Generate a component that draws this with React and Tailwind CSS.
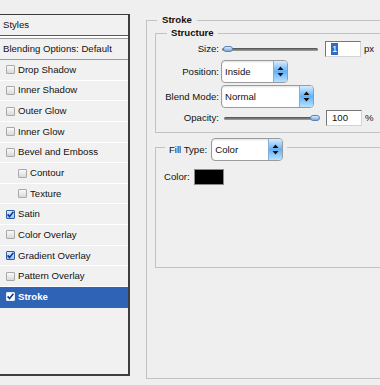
import React from "react";

const rows = [
  { label: "Drop Shadow" },
  { label: "Inner Shadow" },
  { label: "Outer Glow" },
  { label: "Inner Glow" },
  { label: "Bevel and Emboss" },
  { label: "Contour", indent: true },
  { label: "Texture", indent: true },
  { label: "Satin", checked: true },
  { label: "Color Overlay" },
  { label: "Gradient Overlay", checked: true },
  { label: "Pattern Overlay" },
  { label: "Stroke", checked: true, selected: true },
];

const Box = ({ checked, selected }) => (
  <span
    className={`w-[9px] h-[9px] shrink-0 rounded-[1px] border flex items-center justify-center ${
      checked
        ? selected
          ? "border-[#dfe9f7] bg-white"
          : "border-[#2d5ea8] bg-linear-to-b from-[#e4efff] to-[#9cc0ec]"
        : "border-[#a9a9a9] bg-linear-to-b from-[#fafafa] to-[#d9d9d9]"
    }`}
  >
    {checked && (
      <svg width="7" height="7" viewBox="0 0 7 7">
        <path d="M0.6 3.4 L2.6 5.6 L6.4 0.8" stroke="#17398a" strokeWidth="1.6" fill="none" />
      </svg>
    )}
  </span>
);

const Select = ({ value, className }) => (
  <div className={`${className} h-[23px] flex rounded-[4px] border border-[#9b9b9b] bg-white overflow-hidden shadow-[inset_0_1px_2px_rgba(0,0,0,0.12)]`}>
    <span className="flex-1 flex items-center pl-[3px]">{value}</span>
    <span className="w-[14px] flex items-center justify-center border-l border-[#86aedb] bg-linear-to-b from-[#d6ecff] via-[#62b2f6] to-[#b6e2ff]">
      <svg width="7" height="11" viewBox="0 0 7 11">
        <path d="M3.5 0.5 L6.5 4 L0.5 4 Z M0.5 7 L6.5 7 L3.5 10.5 Z" fill="#111" />
      </svg>
    </span>
  </div>
);

const Slider = ({ at, className }) => (
  <div className={`relative ${className} h-[10px]`}>
    <div className="absolute left-0 right-0 top-[4px] h-[3px] rounded-full bg-linear-to-b from-[#4d4d4d] to-[#a6a6a6]" />
    <div
      className={`absolute top-[2px] w-[10px] h-[6px] rounded-full border border-[#5b85b8] bg-linear-to-b from-[#dcecfc] to-[#7aa9de] ${
        at === "end" ? "right-[-2px]" : "left-[1px]"
      }`}
    />
  </div>
);

const Field = ({ children }) => (
  <div className="w-[36px] h-[16px] flex items-center pl-[5px] bg-white border border-[#777] border-r-[#d4d4d4] border-b-[#d4d4d4]">
    {children}
  </div>
);

export default function App() {
  return (
    <div className="w-[380px] h-[385px] overflow-hidden flex bg-[#efefef] text-[9.6px] leading-[12px] text-[#111] font-['Liberation_Sans',Arial,sans-serif]">
      {/* styles list */}
      <div className="mt-[14px] w-[130px] h-[362px] shrink-0 flex flex-col bg-[#f1f1f1] border-t border-r-2 border-b-2 border-[#3d3d3d]">
        <div className="h-[21px] flex items-center pl-[3px] border-b border-[#5a5a5a]">Styles</div>
        <div className="h-[2px] bg-white" />
        <div className="h-[22px] flex items-center pl-[3px] border-t border-[#5a5a5a] border-b border-[#9a9a9a]">
          Blending Options: Default
        </div>
        {rows.map((r) => (
          <div
            key={r.label}
            className={`h-[20.65px] flex items-center gap-[3px] border-b ${r.indent ? "pl-[18px]" : "pl-[6px]"} ${
              r.selected ? "bg-[#2f63b5] border-[#2f63b5] text-white font-bold" : "border-white"
            }`}
          >
            <Box checked={r.checked} selected={r.selected} />
            <span>{r.label}</span>
          </div>
        ))}
      </div>

      {/* stroke panel */}
      <fieldset className="ml-[16px] mt-[14px] w-[234px] h-[365px] shrink-0 border-l border-t border-b border-r-0 border-[#c2c2c2]">
        <legend className="ml-[10px] px-[5px] font-bold leading-[12px]">Stroke</legend>

        <fieldset className="ml-[8px] mt-[1px] pb-[6px] border-l border-t border-b border-r-0 border-[#c2c2c2]">
          <legend className="ml-[11px] px-[4px] font-bold leading-[12px]">Structure</legend>

          <div className="mt-[1px] h-[17px] flex items-center">
            <span className="w-[63px] text-right">Size:</span>
            <Slider className="ml-[3px] w-[96px]" />
            <div className="ml-[7px]">
              <Field>
                <span className="bg-[#316ac5] text-white px-[1px]">1</span>
              </Field>
            </div>
            <span className="ml-[3px]">px</span>
          </div>

          <div className="mt-[3px] h-[23px] flex items-center">
            <span className="w-[63px] text-right">Position:</span>
            <Select value="Inside" className="ml-[2px] w-[67px]" />
          </div>

          <div className="mt-[2px] h-[23px] flex items-center">
            <span className="w-[63px] text-right">Blend Mode:</span>
            <Select value="Normal" className="ml-[2px] w-[93px]" />
          </div>

          <div className="mt-[2px] h-[16px] flex items-center">
            <span className="w-[63px] text-right">Opacity:</span>
            <Slider at="end" className="ml-[5px] w-[94px]" />
            <div className="ml-[8px]">
              <Field>100</Field>
            </div>
            <span className="ml-[3px]">%</span>
          </div>
        </fieldset>

        <fieldset className="ml-[8px] mt-[1px] h-[134px] border-l border-t border-b border-r-0 border-[#c2c2c2]">
          <legend className="ml-[9px] px-[4px] pt-[4px]">
            <div className="flex items-center">
              <span>Fill Type:</span>
              <Select value="Color" className="ml-[4px] w-[72px]" />
            </div>
          </legend>

          <div className="mt-[8px] pl-[8px] flex items-center">
            <span>Color:</span>
            <span className="ml-[4px] w-[30px] h-[16px] bg-black border border-[#8a8a8a]" />
          </div>
        </fieldset>
      </fieldset>
    </div>
  );
}
